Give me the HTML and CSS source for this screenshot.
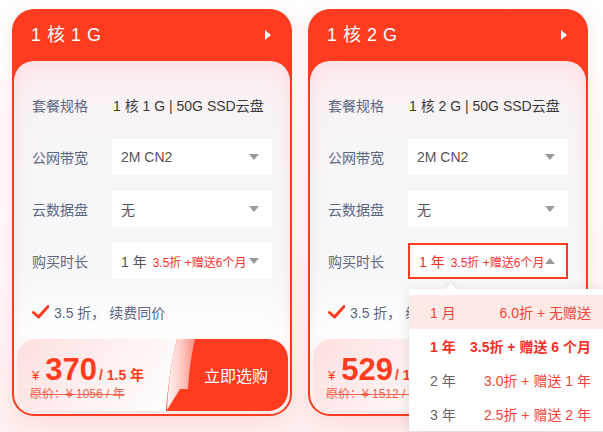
FILE: index.html
```html
<!DOCTYPE html>
<html lang="zh-CN">
<head>
<meta charset="utf-8">
<title>云服务器套餐</title>
<link rel="stylesheet" href="styles.css">
</head>
<body>
<div class="page">
  <div class="card">
    <div class="card-head"><span class="title">1 核 1 G</span><span class="head-arrow"></span></div>
    <div class="panel">
      <div class="row"><span class="label">套餐规格</span><span class="value">1 核 1 G | 50G SSD云盘</span></div>
      <div class="row"><span class="label">公网带宽</span><div class="select"><span class="sel-text">2M CN2</span><span class="caret"></span></div></div>
      <div class="row"><span class="label">云数据盘</span><div class="select"><span class="sel-text">无</span><span class="caret"></span></div></div>
      <div class="row"><span class="label">购买时长</span><div class="select"><span class="sel-text">1 年<em class="promo">3.5折 +赠送6个月</em></span><span class="caret"></span></div></div>
      <div class="feature">
        <svg class="check" width="17" height="14" viewBox="0 0 17 14"><path d="M1.5 7.5 L6.5 12 L16 1.5" fill="none" stroke="#ff3c1f" stroke-width="3" stroke-linecap="round" stroke-linejoin="round"/></svg>
        <span>3.5 折， 续费同价</span>
      </div>
      <div class="price-box">
        <div class="price-info">
          <div class="price-line"><span class="yen">¥</span><span class="amount">370</span><span class="per">/ 1.5 年</span></div>
          <div class="orig">原价：¥ 1056 / 年</div>
        </div>
        <div class="buy">
          <svg class="buy-bg" viewBox="0 0 122 72" preserveAspectRatio="none">
            <defs><linearGradient id="curl1" x1="0" y1="0" x2="1" y2="0"><stop offset="0" stop-color="#fff4f3"/><stop offset="0.55" stop-color="#ffc6bf"/><stop offset="1" stop-color="#ff8f82"/></linearGradient></defs>
            <path d="M11 0 H122 V72 H0 C2 45 6 20 11 0 Z" fill="#ff3c1f"/>
            <path d="M11 0 H29 C25 17 23 33 22 50 H14 L1 71 C2 45 6 20 11 0 Z" fill="url(#curl1)"/>
          </svg>
          <span class="buy-text">立即选购</span>
        </div>
      </div>
    </div>
  </div>

  <div class="card">
    <div class="card-head"><span class="title">1 核 2 G</span><span class="head-arrow"></span></div>
    <div class="panel">
      <div class="row"><span class="label">套餐规格</span><span class="value">1 核 2 G | 50G SSD云盘</span></div>
      <div class="row"><span class="label">公网带宽</span><div class="select"><span class="sel-text">2M CN2</span><span class="caret"></span></div></div>
      <div class="row"><span class="label">云数据盘</span><div class="select"><span class="sel-text">无</span><span class="caret"></span></div></div>
      <div class="row"><span class="label">购买时长</span>
        <div class="select active"><span class="sel-text">1 年<em class="promo">3.5折 +赠送6个月</em></span><span class="caret up"></span>
          <div class="dropdown">
            <div class="opt hover"><span class="opt-l">1 月</span><span class="opt-r">6.0折 + 无赠送</span></div>
            <div class="opt chosen"><span class="opt-l">1 年</span><span class="opt-r">3.5折 + 赠送 6 个月</span></div>
            <div class="opt"><span class="opt-l">2 年</span><span class="opt-r">3.0折 + 赠送 1 年</span></div>
            <div class="opt"><span class="opt-l">3 年</span><span class="opt-r">2.5折 + 赠送 2 年</span></div>
          </div>
        </div>
      </div>
      <div class="feature">
        <svg class="check" width="17" height="14" viewBox="0 0 17 14"><path d="M1.5 7.5 L6.5 12 L16 1.5" fill="none" stroke="#ff3c1f" stroke-width="3" stroke-linecap="round" stroke-linejoin="round"/></svg>
        <span>3.5 折， 续费同价</span>
      </div>
      <div class="price-box">
        <div class="price-info">
          <div class="price-line"><span class="yen">¥</span><span class="amount">529</span><span class="per">/ 1.5 年</span></div>
          <div class="orig">原价：¥ 1512 / 年</div>
        </div>
        <div class="buy">
          <svg class="buy-bg" viewBox="0 0 122 72" preserveAspectRatio="none">
            <defs><linearGradient id="curl2" x1="0" y1="0" x2="1" y2="0"><stop offset="0" stop-color="#fff4f3"/><stop offset="0.55" stop-color="#ffc6bf"/><stop offset="1" stop-color="#ff8f82"/></linearGradient></defs>
            <path d="M11 0 H122 V72 H0 C2 45 6 20 11 0 Z" fill="#ff3c1f"/>
            <path d="M11 0 H29 C25 17 23 33 22 50 H14 L1 71 C2 45 6 20 11 0 Z" fill="url(#curl2)"/>
          </svg>
          <span class="buy-text">立即选购</span>
        </div>
      </div>
    </div>
  </div>
</div>
</body>
</html>
```

FILE: styles.css
```css
html, body {
  margin: 0;
  padding: 0;
}
body {
  width: 603px;
  height: 432px;
  overflow: hidden;
  background: linear-gradient(180deg, #ffffff 0%, #fffafa 55%, #fdf0ef 100%);
  font-family: "Liberation Sans", "Noto Sans CJK SC", sans-serif;
}
.page {
  display: flex;
  gap: 16px;
  padding: 9px 12px 0;
}
.card {
  width: 280px;
  box-sizing: border-box;
  background: #ff3c1f;
  border-radius: 22px;
  padding: 0 2px 2px;
  box-shadow: 0 6px 22px rgba(255, 80, 60, 0.12);
}
.card-head {
  height: 52px;
  display: flex;
  align-items: center;
  justify-content: space-between;
  padding: 0 19px 0 17px;
}
.title {
  color: #fff;
  font-size: 18px;
  line-height: 1;
  word-spacing: 1px;
}
.head-arrow {
  width: 0;
  height: 0;
  border-left: 6px solid #fff;
  border-top: 5px solid transparent;
  border-bottom: 5px solid transparent;
}
.panel {
  border-radius: 20px;
  padding: 26px 2px 3px 3px;
  background: linear-gradient(180deg, #fcebed 0%, #f8f3f5 14%, #f6f6f8 35%, #f8f8fa 62%, #ffffff 78%, #fffafa 100%);
  box-shadow: inset 0 0 22px rgba(255, 110, 110, 0.13);
}
.row {
  display: flex;
  align-items: center;
  height: 36px;
  padding: 0 16px 0 15px;
}
.row + .row {
  margin-top: 16px;
}
.label {
  width: 80px;
  flex: none;
  color: #5d6782;
  font-size: 14px;
}
.value {
  color: #3a3a3a;
  font-size: 14px;
  padding-left: 1px;
}
.select {
  position: relative;
  width: 160px;
  height: 36px;
  box-sizing: border-box;
  background: #fff;
  display: flex;
  align-items: center;
  padding: 0 13px 0 9px;
}
.select.active {
  border: 2px solid #ff3c1f;
  padding: 0 11px 0 9px;
}
.sel-text {
  color: #555;
  font-size: 14px;
  white-space: nowrap;
}
.promo {
  font-style: normal;
  font-size: 12px;
  color: #f8312c;
  margin-left: 6px;
}
.select.active .sel-text {
  color: #f8312c;
}
.caret {
  margin-left: auto;
  width: 0;
  height: 0;
  border-left: 5px solid transparent;
  border-right: 5px solid transparent;
  border-top: 6px solid #9a9a9a;
}
.caret.up {
  border-top: 0;
  border-bottom: 6px solid #9a9a9a;
}
.dropdown {
  position: absolute;
  z-index: 10;
  top: calc(100% + 12px);
  left: -1px;
  width: 200px;
  background: #fff;
  padding-top: 6px;
  box-shadow: 0 2px 12px rgba(0, 0, 0, 0.12);
}
.dropdown::before {
  content: "";
  position: absolute;
  top: -4px;
  left: 38px;
  width: 8px;
  height: 8px;
  background: #fff;
  transform: rotate(45deg);
  box-shadow: -2px -2px 4px rgba(0, 0, 0, 0.05);
}
.opt {
  position: relative;
  display: flex;
  justify-content: space-between;
  align-items: center;
  height: 34px;
  padding: 0 18px 0 21px;
  font-size: 14px;
  white-space: nowrap;
}
.opt-l {
  color: #666;
}
.opt-r {
  color: #f0443a;
}
.opt.hover {
  background: #fde9e6;
}
.opt.hover .opt-l {
  color: #f0443a;
}
.opt.chosen .opt-l,
.opt.chosen .opt-r {
  color: #f5302a;
  font-weight: bold;
}
.feature {
  margin-top: 24px;
  height: 18px;
  display: flex;
  align-items: center;
  gap: 5px;
  padding-left: 15px;
  color: #5d6782;
  font-size: 14px;
}
.check {
  flex: none;
}
.price-box {
  margin-top: 18px;
  height: 72px;
  border-radius: 20px;
  overflow: hidden;
  display: flex;
  background: linear-gradient(125deg, #fddfe0 0%, #fff1f1 35%, #ffffff 65%);
  box-shadow: 0 2px 8px rgba(200, 80, 80, 0.08);
}
.price-info {
  flex: 1;
  padding: 15px 0 0 15px;
  white-space: nowrap;
}
.price-line {
  display: flex;
  align-items: baseline;
  height: 32px;
  line-height: 32px;
  color: #ff3c1f;
}
.yen {
  font-size: 13px;
  margin-right: 6px;
}
.amount {
  font-size: 31px;
  font-weight: bold;
  margin-right: 2px;
}
.per {
  font-size: 14px;
  font-weight: bold;
}
.orig {
  height: 16px;
  line-height: 16px;
  font-size: 12px;
  color: #f2644f;
  text-decoration: line-through;
  margin-left: -2px;
}
.buy {
  position: relative;
  width: 122px;
  flex: none;
  display: flex;
  align-items: center;
  justify-content: center;
  padding-left: 18px;
  box-sizing: border-box;
}
.buy-bg {
  position: absolute;
  left: 0;
  top: 0;
  width: 100%;
  height: 100%;
}
.buy-text {
  position: relative;
  color: #fff;
  font-size: 16px;
}
```
